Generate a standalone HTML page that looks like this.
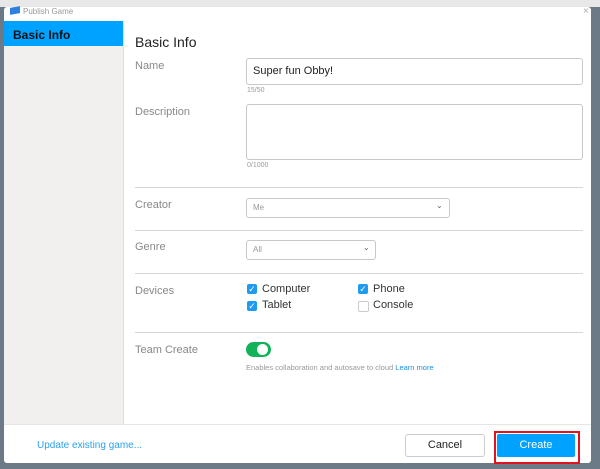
<!DOCTYPE html><html><head><style>
body{margin:0;width:600px;height:469px;background:#6b7a86;font-family:"Liberation Sans",sans-serif;position:relative;overflow:hidden}
.bgtop{position:absolute;left:0;top:0;width:600px;height:7px;background:#e8e8e8}
.dlg{position:absolute;left:4px;top:7px;width:587px;height:456px;background:#fff;border-radius:3px}
.t{position:absolute;white-space:nowrap}
.side{position:absolute;left:4px;top:21px;width:119px;height:403px;background:#f1f0ee;border-right:1px solid #ddd}
.sel{position:absolute;left:4px;top:21px;width:119px;height:25px;background:#00a2ff}
.lbl{font-size:11px;color:#888}
.inp{position:absolute;border:1px solid #c8c8c8;border-radius:3px;background:#fff}
.hr{position:absolute;left:135px;width:448px;height:1px;background:#d6d6d6}
.cb{position:absolute;width:10px;height:10px;border-radius:2px;background:#1e9bf0;color:#fff;font-size:9px;line-height:10px;text-align:center}
.cbx{background:#fff;border:1px solid #ccc;width:9px;height:9px}
.ck{font-size:11px;color:#333}
</style></head><body>
<div class="bgtop"></div>
<div class="dlg"></div>
<div class="t" style="left:10px;top:7px;width:10px;height:7px;background:#2d7fe0;transform:skewY(-10deg)"></div>
<div class="t" style="left:23px;top:7px;font-size:8px;color:#999">Publish Game</div>
<div class="t" style="left:583px;top:6px;font-size:10px;color:#aaa">×</div>
<div class="side"></div>
<div class="sel"></div>
<div class="t" style="left:13px;top:28px;font-size:12px;font-weight:bold;color:#111">Basic Info</div>
<div class="t" style="left:135px;top:34px;font-size:14px;color:#222">Basic Info</div>
<div class="t lbl" style="left:135px;top:60px">Name</div>
<div class="inp" style="left:246px;top:58px;width:335px;height:25px"></div>
<div class="t" style="left:253px;top:65px;font-size:11px;color:#222">Super fun Obby!</div>
<div class="t" style="left:247px;top:87px;font-size:7px;color:#999">15/50</div>
<div class="t lbl" style="left:135px;top:106px">Description</div>
<div class="inp" style="left:246px;top:104px;width:335px;height:54px"></div>
<div class="t" style="left:247px;top:162px;font-size:7px;color:#999">0/1000</div>
<div class="hr" style="top:187px"></div>
<div class="t lbl" style="left:135px;top:199px">Creator</div>
<div class="inp" style="left:246px;top:198px;width:202px;height:18px"></div>
<div class="t" style="left:253px;top:203px;font-size:8px;color:#999">Me</div>
<div class="t" style="left:436px;top:201px;font-size:8px;color:#666">⌄</div>
<div class="hr" style="top:230px"></div>
<div class="t lbl" style="left:135px;top:241px">Genre</div>
<div class="inp" style="left:246px;top:240px;width:128px;height:18px"></div>
<div class="t" style="left:253px;top:245px;font-size:8px;color:#999">All</div>
<div class="t" style="left:363px;top:243px;font-size:8px;color:#666">⌄</div>
<div class="hr" style="top:273px"></div>
<div class="t lbl" style="left:135px;top:285px">Devices</div>
<div class="cb" style="left:247px;top:284px">✓</div><div class="t ck" style="left:262px;top:283px">Computer</div>
<div class="cb" style="left:358px;top:284px">✓</div><div class="t ck" style="left:373px;top:283px">Phone</div>
<div class="cb" style="left:247px;top:301px">✓</div><div class="t ck" style="left:262px;top:299px">Tablet</div>
<div class="cb cbx" style="left:358px;top:301px"></div><div class="t ck" style="left:373px;top:299px">Console</div>
<div class="hr" style="top:332px"></div>
<div class="t lbl" style="left:135px;top:344px">Team Create</div>
<div class="t" style="left:246px;top:342px;width:25px;height:15px;border-radius:8px;background:#11b35a"></div>
<div class="t" style="left:257px;top:344px;width:11px;height:11px;border-radius:6px;background:#fff"></div>
<div class="t" style="left:246px;top:363px;font-size:7.5px;color:#999">Enables collaboration and autosave to cloud <span style="color:#1e8fe0">Learn more</span></div>
<div class="t" style="left:4px;top:424px;width:587px;height:1px;background:#e6e6e6"></div>
<div class="t" style="left:37px;top:440px;font-size:10px;color:#2aa0ef">Update existing game...</div>
<div class="t" style="left:405px;top:434px;width:78px;height:21px;border:1px solid #ccc;border-radius:3px;text-align:center;line-height:21px;font-size:11px;color:#222">Cancel</div>
<div class="t" style="left:494px;top:431px;width:82px;height:29px;border:2px solid #e0141e"></div>
<div class="t" style="left:497px;top:434px;width:78px;height:23px;background:#00a2ff;border-radius:2px;text-align:center;line-height:23px;font-size:11px;color:#fff">Create</div>
</body></html>
